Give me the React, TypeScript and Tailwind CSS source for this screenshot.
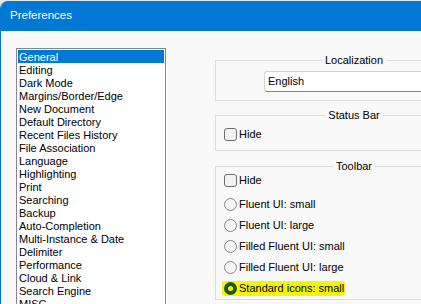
import React from 'react';

const sections = [
  'General',
  'Editing',
  'Dark Mode',
  'Margins/Border/Edge',
  'New Document',
  'Default Directory',
  'Recent Files History',
  'File Association',
  'Language',
  'Highlighting',
  'Print',
  'Searching',
  'Backup',
  'Auto-Completion',
  'Multi-Instance & Date',
  'Delimiter',
  'Performance',
  'Cloud & Link',
  'Search Engine',
  'MISC',
];

const toolbarOptions = [
  'Fluent UI: small',
  'Fluent UI: large',
  'Filled Fluent UI: small',
  'Filled Fluent UI: large',
];

function GroupBox({
  title,
  className,
  children,
}: {
  title: string;
  className: string;
  children: React.ReactNode;
}) {
  return (
    <div className={`relative w-[278px] border border-[#dcdcdc] ${className}`}>
      <span className="absolute left-0 right-0 -top-[8px] flex justify-center">
        <span className="bg-[#f9f9f9] px-[3px] leading-[15px] text-black">{title}</span>
      </span>
      {children}
    </div>
  );
}

function Checkbox({ label }: { label: string }) {
  return (
    <div className="flex items-center whitespace-nowrap">
      <span className="w-[13px] h-[13px] shrink-0 rounded-[3px] border border-[#6e6e6e] bg-[#f3f3f3]" />
      <span className="ml-[2px] leading-[15px] text-black">{label}</span>
    </div>
  );
}

function Radio({ label }: { label: string }) {
  return (
    <div className="flex items-center h-[21px] whitespace-nowrap">
      <span className="w-[13px] h-[13px] shrink-0 rounded-full border border-[#8a8a8a] bg-[#f5f5f5]" />
      <span className="ml-[2px] leading-[15px] text-black">{label}</span>
    </div>
  );
}

export default function App() {
  return (
    <div
      className="w-[421px] h-[304px] overflow-hidden bg-[#e6e6e6] text-[11px]"
      style={{ fontFamily: '"Liberation Sans", Arial, sans-serif' }}
    >
      <div className="mt-px h-[303px] rounded-tl-[8px] border-l border-[#0078d4] overflow-hidden flex flex-col">
        {/* Title bar */}
        <div className="h-[30px] shrink-0 bg-[#0078d4] text-white text-[11.5px] pl-[9px] flex items-center">
          Preferences
        </div>

        {/* Body */}
        <div className="flex-1 bg-[#f9f9f9] flex">
          {/* Section list */}
          <div className="ml-[15px] mt-[17px] w-[150px] shrink-0 border border-[#828790] bg-white p-px self-start">
            {sections.map((s, i) => (
              <div
                key={s}
                className={`h-[13px] leading-[14px] pl-[1px] whitespace-nowrap ${
                  i === 0 ? 'bg-[#0078d7] text-white' : 'text-black'
                }`}
              >
                {s}
              </div>
            ))}
          </div>

          {/* Settings */}
          <div className="ml-[49px] flex flex-col shrink-0">
            <GroupBox title="Localization" className="mt-[29px] h-[41px] pt-[10px] pl-[48px]">
              <div className="h-[21px] w-[240px] rounded-[3px] border border-[#d0d0d0] border-b-[#868686] bg-white pl-[3px] flex items-center text-black">
                English
              </div>
            </GroupBox>

            <GroupBox title="Status Bar" className="mt-[14px] h-[36px] pt-[11px] pl-[8px]">
              <Checkbox label="Hide" />
            </GroupBox>

            <GroupBox title="Toolbar" className="mt-[15px] h-[134px] pt-[6px] pl-[8px]">
              <Checkbox label="Hide" />
              <div className="mt-[6px] flex flex-col">
                {toolbarOptions.map((o) => (
                  <Radio key={o} label={o} />
                ))}
                <div className="h-[21px] flex items-center">
                  <div className="-ml-[2px] flex items-center h-[15px] pl-[2px] pr-px rounded-[3px] bg-[#f5f50a] whitespace-nowrap">
                    <span className="w-[13px] h-[13px] shrink-0 rounded-full bg-[#1e5a06] flex items-center justify-center">
                      <span className="w-[5px] h-[5px] rounded-full bg-[#f5f50a]" />
                    </span>
                    <span className="ml-[2px] leading-[15px] text-black">Standard icons: small</span>
                  </div>
                </div>
              </div>
            </GroupBox>
          </div>
        </div>
      </div>
    </div>
  );
}
